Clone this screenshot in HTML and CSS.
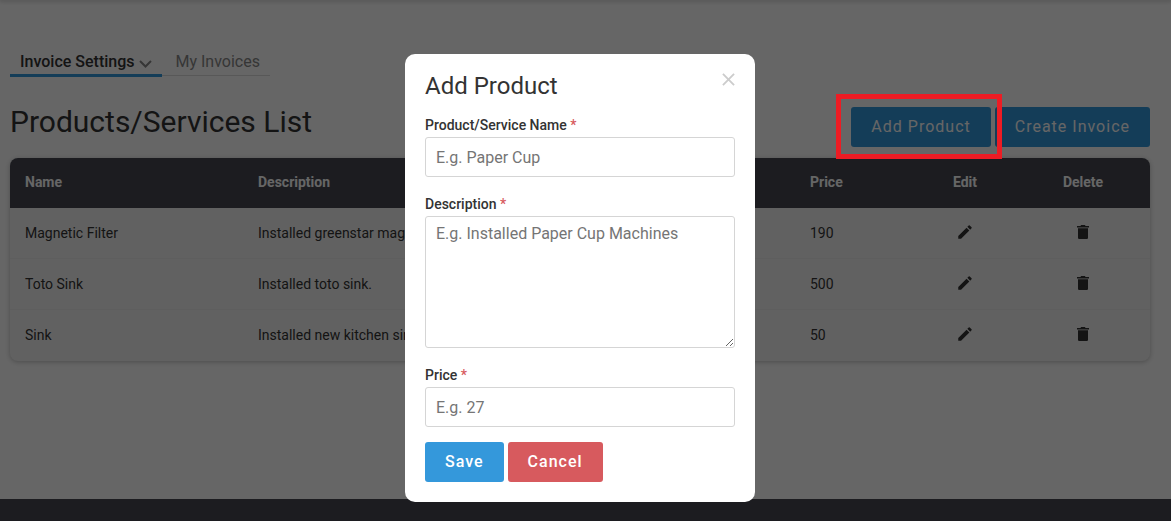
FILE: index.html
```html
<!DOCTYPE html>
<html lang="en">
<head>
    <meta charset="UTF-8">
    <meta name="viewport" content="width=device-width, initial-scale=1.0">
    <title>Products/Services List</title>
    <link rel="stylesheet" href="styles.css">
</head>
<body>
    <!-- shared icons -->
    <svg class="sprite" aria-hidden="true">
        <symbol id="edit" viewBox="0 0 24 24">
            <path d="M3 17.25V21h3.75L17.81 9.94l-3.75-3.75L3 17.25zM20.71 7.04a1 1 0 0 0 0-1.41l-2.34-2.34a1 1 0 0 0-1.41 0l-1.83 1.83 3.75 3.75 1.83-1.83z"/>
        </symbol>
        <symbol id="delete" viewBox="0 0 24 24">
            <path d="M5.300 19.500c0 1 .9 1.800 2 1.800h9.400c1.100 0 2-.8 2-1.800V7H5.300v12.500zM20 4h-4.500l-1-1.300h-5L8.500 4H4v2h16V4z"/>
        </symbol>
    </svg>

    <header class="topbar"></header>

    <main class="content">
        <nav class="tabs">
            <a href="#settings" class="tab active">Invoice Settings
                <svg class="chevron" viewBox="0 0 13 8"><path d="M1 1l5.500 5.500L12 1"/></svg>
            </a>
            <a href="#invoices" class="tab">My Invoices</a>
        </nav>

        <div class="page-head">
            <h1>Products/Services List</h1>
            <div class="page-actions">
                <div class="highlight">
                    <button type="button" class="btn">Add Product</button>
                </div>
                <button type="button" class="btn">Create Invoice</button>
            </div>
        </div>

        <table class="products">
            <thead>
                <tr>
                    <th class="col-name">Name</th>
                    <th>Description</th>
                    <th class="col-price">Price</th>
                    <th class="col-edit">Edit</th>
                    <th class="col-delete">Delete</th>
                </tr>
            </thead>
            <tbody>
                <tr>
                    <td>Magnetic Filter</td>
                    <td>Installed greenstar magnetic filter.</td>
                    <td>190</td>
                    <td class="icon-cell"><button type="button" aria-label="Edit Magnetic Filter"><svg><use href="#edit"/></svg></button></td>
                    <td class="icon-cell"><button type="button" aria-label="Delete Magnetic Filter"><svg><use href="#delete"/></svg></button></td>
                </tr>
                <tr>
                    <td>Toto Sink</td>
                    <td>Installed toto sink.</td>
                    <td>500</td>
                    <td class="icon-cell"><button type="button" aria-label="Edit Toto Sink"><svg><use href="#edit"/></svg></button></td>
                    <td class="icon-cell"><button type="button" aria-label="Delete Toto Sink"><svg><use href="#delete"/></svg></button></td>
                </tr>
                <tr>
                    <td>Sink</td>
                    <td>Installed new kitchen sink.</td>
                    <td>50</td>
                    <td class="icon-cell"><button type="button" aria-label="Edit Sink"><svg><use href="#edit"/></svg></button></td>
                    <td class="icon-cell"><button type="button" aria-label="Delete Sink"><svg><use href="#delete"/></svg></button></td>
                </tr>
            </tbody>
        </table>
    </main>

    <footer class="footer"></footer>

    <div class="overlay">
        <div class="modal" role="dialog" aria-labelledby="modalTitle">
            <button type="button" class="close" aria-label="Close">
                <svg viewBox="0 0 14 14"><path d="M1 1l12 12M13 1L1 13"/></svg>
            </button>
            <h2 id="modalTitle">Add Product</h2>
            <form>
                <div class="field">
                    <label for="productName">Product/Service Name <span class="required">*</span></label>
                    <input type="text" id="productName" placeholder="E.g. Paper Cup">
                </div>
                <div class="field">
                    <label for="description">Description <span class="required">*</span></label>
                    <textarea id="description" placeholder="E.g. Installed Paper Cup Machines"></textarea>
                </div>
                <div class="field">
                    <label for="price">Price <span class="required">*</span></label>
                    <input type="text" id="price" placeholder="E.g. 27">
                </div>
                <div class="form-actions">
                    <button type="button" class="btn">Save</button>
                    <button type="button" class="btn btn-danger">Cancel</button>
                </div>
            </form>
        </div>
    </div>
</body>
</html>
```
FILE: styles.css
```css
* {
    box-sizing: border-box;
}

body {
    display: flex;
    flex-direction: column;
    min-height: 100vh;
    margin: 0;
    background: #fff;
    color: #333;
    font-family: Roboto, "Liberation Sans", sans-serif;
    font-size: 14px;
}

button,
input,
textarea {
    font-family: inherit;
}

.sprite {
    position: absolute;
    width: 0;
    height: 0;
}

.topbar {
    box-shadow: 0 0 4px 1px rgba(0, 0, 0, 0.3);
}

.content {
    flex: 1;
    padding: 48px 21px 30px 10px;
}

/* tabs */
.tabs {
    display: flex;
    margin-bottom: 30px;
}

.tab {
    height: 29px;
    padding: 0 10px;
    border-bottom: 1px solid #ddd;
    color: #888;
    font-size: 16px;
    line-height: 27px;
    text-decoration: none;
}

.tab:not(.active) {
    height: 28px;
    padding-left: 14px;
}

.tab.active {
    border-bottom: 3px solid #3498db;
    color: #333;
    font-weight: 500;
}

.chevron {
    width: 13px;
    height: 8px;
    fill: none;
    stroke: #888;
    stroke-width: 2;
    vertical-align: -1px;
}

/* heading row */
.page-head {
    display: flex;
    justify-content: space-between;
    align-items: flex-start;
    margin-bottom: 11px;
}

h1,
h2 {
    margin: 0;
    font-weight: 400;
}

h1 {
    font-size: 30px;
    line-height: 30px;
}

.page-actions,
.form-actions {
    display: flex;
    gap: 4px;
}

.btn {
    height: 40px;
    padding: 0 20px 2px;
    border: none;
    border-radius: 3px;
    background: #3498db;
    color: #fff;
    font-size: 16px;
    font-weight: 500;
    letter-spacing: 1px;
    cursor: pointer;
}

.page-actions .btn {
    font-weight: 400;
}

.btn-danger {
    background: #d75a5e;
}

.highlight {
    position: relative;
}

/* stays above the overlay */
.highlight::after {
    content: "";
    position: absolute;
    inset: -13px -11px -12px -15px;
    border: 5px solid #ed1c24;
    z-index: 20;
    pointer-events: none;
}

/* products table */
.products {
    width: 100%;
    table-layout: fixed;
    border-spacing: 0;
    border-radius: 8px;
    overflow: hidden;
    background: #f3f3f3;
    box-shadow: 0 1px 5px rgba(0, 0, 0, 0.25);
}

.products th,
.products td {
    padding: 0 15px;
    text-align: left;
}

.products th {
    height: 50px;
    padding-bottom: 2px;
    background: #464852;
    color: #fff;
    font-weight: 700;
}

.products td {
    height: 51px;
    border-bottom: 1px solid #ebebeb;
}

.products tr:last-child td {
    border-bottom-color: transparent;
}

.col-name {
    width: 233px;
}

.col-price {
    width: 119px;
}

.col-edit {
    width: 102px;
}

.col-delete {
    width: 134px;
}

.products .col-edit,
.products .col-delete,
.products .icon-cell {
    text-align: center;
}

.icon-cell button {
    padding: 0;
    border: none;
    background: none;
    cursor: pointer;
}

.icon-cell svg {
    display: block;
    width: 18px;
    height: 18px;
    fill: #333;
}

.footer {
    height: 22px;
    background: #464852;
}

/* modal */
.overlay {
    position: fixed;
    inset: 0;
    display: flex;
    justify-content: center;
    align-items: flex-start;
    padding: 54px 11px 0 0;
    background: rgba(0, 0, 0, 0.6);
    z-index: 10;
}

.modal {
    position: relative;
    width: 350px;
    padding: 20px;
    border-radius: 10px;
    background: #fff;
}

.modal h2 {
    margin-bottom: 15px;
    font-size: 24px;
    line-height: 24px;
}

.close {
    position: absolute;
    top: 19px;
    right: 20px;
    padding: 0;
    border: none;
    background: none;
    cursor: pointer;
}

.close svg {
    display: block;
    width: 13px;
    height: 13px;
    fill: none;
    stroke: #ccc;
    stroke-width: 2;
}

.field {
    margin-bottom: 15px;
}

.field label {
    display: block;
    font-weight: 500;
    line-height: 24px;
}

.required {
    color: #d75a5e;
}

.field input,
.field textarea {
    display: block;
    width: 100%;
    height: 40px;
    padding: 0 10px;
    border: 1px solid #d5d5d5;
    border-radius: 3px;
    color: #333;
    font-size: 16px;
}

.field textarea {
    height: 132px;
    padding: 7px 10px;
    resize: vertical;
}

::placeholder {
    color: #757575;
}
```
